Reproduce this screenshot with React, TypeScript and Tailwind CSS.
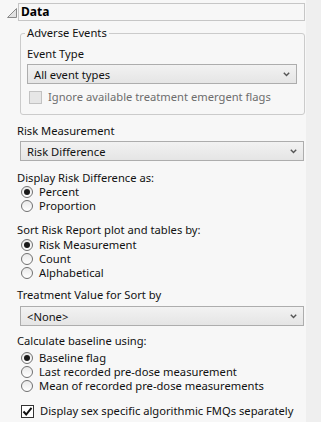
import type { ReactNode } from 'react';

const font = "font-['Noto_Sans',_sans-serif]";

function Chevron() {
  return (
    <svg width="7" height="5" viewBox="0 0 7 5" className="shrink-0">
      <polyline points="0.8,0.8 3.5,3.6 6.2,0.8" fill="none" stroke="#555" strokeWidth="1.4" />
    </svg>
  );
}

function Select({ value, width }: { value: string; width: string }) {
  return (
    <div
      className={`${width} h-[20px] flex items-center justify-between pl-[6px] pr-[6px] border border-[#adadad] bg-gradient-to-b from-[#f2f2f2] to-[#e5e5e5] text-[#111]`}
    >
      <span className="leading-[14px] pt-[1px]">{value}</span>
      <Chevron />
    </div>
  );
}

function Radio({ label, checked }: { label: string; checked?: boolean }) {
  return (
    <div className="flex items-center h-[14px] pl-[4px]">
      <span className="w-[12px] h-[12px] rounded-full border border-[#707070] bg-gradient-to-b from-[#e9e9e9] to-white flex items-center justify-center">
        {checked && <span className="w-[6px] h-[6px] rounded-full bg-[#1a1a1a]" />}
      </span>
      <span className="ml-[6px] leading-[14px]">{label}</span>
    </div>
  );
}

function Label({ children, className = '' }: { children: ReactNode; className?: string }) {
  return <div className={`leading-[14px] ${className}`}>{children}</div>;
}

export default function App() {
  return (
    <div className={`w-[321px] h-[422px] bg-[#efefef] flex ${font} text-[11.2px] text-[#111]`}>
      <div className="w-[306px] h-full bg-[#f7f7f7] pl-[17px] overflow-hidden">
        {/* header */}
        <div className="flex items-center mt-[3px] -ml-[10px]">
          <svg width="10" height="10" viewBox="0 0 10 10" className="mt-[2px] mr-[1px]">
            <polygon points="0.5,9.5 9.5,0.5 9.5,9.5" fill="#e2e2e2" stroke="#8a8a8a" strokeWidth="1" />
          </svg>
          <div className="w-[287px] h-[18px] border border-[#c6c6c6] flex items-center pl-[2px]">
            <span className="font-bold text-[12px] leading-[14px] text-black">Data</span>
          </div>
        </div>

        {/* adverse events group */}
        <fieldset className="ml-[3px] mt-[5px] w-[285px] border border-[#cbcbcb] rounded-[3px] pl-[6px] pb-[10px]">
          <legend className="px-[2px] -ml-[2px] leading-[14px]">Adverse Events</legend>
          <Label className="mt-[7px]">Event Type</Label>
          <div className="mt-[3px]">
            <Select value="All event types" width="w-[270px]" />
          </div>
          <div className="flex items-center h-[14px] mt-[6px] pl-[2px]">
            <span className="w-[13px] h-[13px] border border-[#c2c2c2] bg-[#e6e6e6]" />
            <span className="ml-[6px] leading-[14px] text-[#6d6d6d]">Ignore available treatment emergent flags</span>
          </div>
        </fieldset>

        <Label className="mt-[9px]">Risk Measurement</Label>
        <div className="mt-[3px] ml-[3px]">
          <Select value="Risk Difference" width="w-[284px]" />
        </div>

        <Label className="mt-[10px]">Display Risk Difference as:</Label>
        <Radio label="Percent" checked />
        <Radio label="Proportion" />

        <Label className="mt-[10px]">Sort Risk Report plot and tables by:</Label>
        <div className="mt-[1px]">
          <Radio label="Risk Measurement" checked />
          <Radio label="Count" />
          <Radio label="Alphabetical" />
        </div>

        <Label className="mt-[8px]">Treatment Value for Sort by</Label>
        <div className="mt-[4px] ml-[3px]">
          <Select value="<None>" width="w-[284px]" />
        </div>

        <Label className="mt-[8px]">Calculate baseline using:</Label>
        <div className="mt-[3px]">
          <Radio label="Baseline flag" checked />
          <Radio label="Last recorded pre-dose measurement" />
          <Radio label="Mean of recorded pre-dose measurements" />
        </div>

        <div className="flex items-center h-[14px] mt-[11px] pl-[4px]">
          <span className="w-[13px] h-[13px] border border-[#333] bg-white flex items-center justify-center">
            <svg width="11" height="11" viewBox="0 0 11 11">
              <polyline points="1.5,5.5 4.2,8.5 9.5,1.8" fill="none" stroke="#111" strokeWidth="2" />
            </svg>
          </span>
          <span className="ml-[6px] leading-[14px]">Display sex specific algorithmic FMQs separately</span>
        </div>
      </div>
    </div>
  );
}
